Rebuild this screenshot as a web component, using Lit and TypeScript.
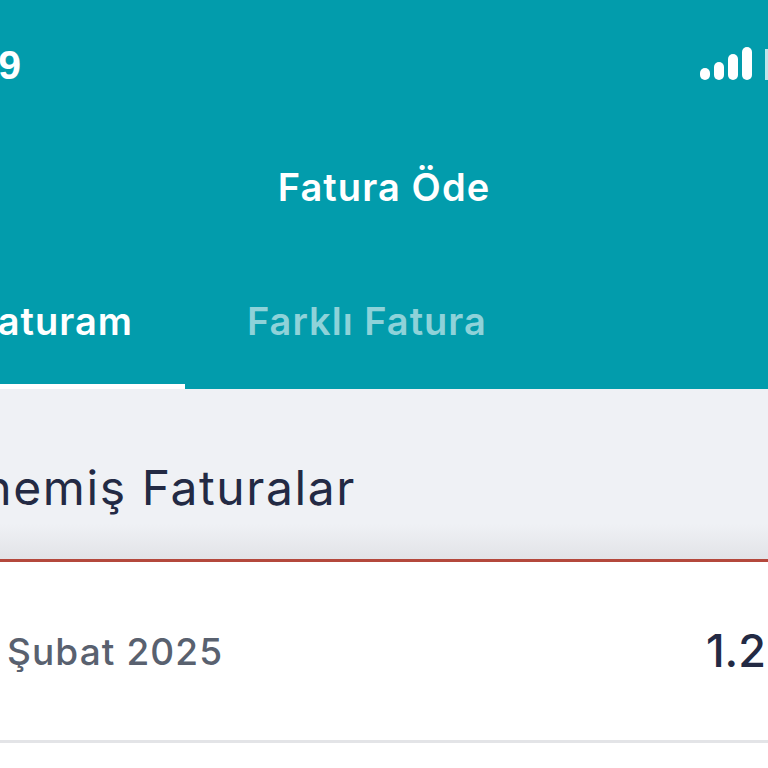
import { LitElement, html, css } from "lit";
import { customElement } from "lit/decorators.js";

@customElement("app-root")
export class AppRoot extends LitElement {
  static styles = css`
    :host { display: block; width: 768px; height: 768px; overflow: hidden; background: #fff;
      font-family: "Inter", "Noto Sans", sans-serif; }
    .header { height: 389px; background: #029cac; display: flex; flex-direction: column; color: #fff; }
    .status { height: 130px; flex: none; display: flex; align-items: flex-start; justify-content: space-between; }
    .time { font: 700 41px/1 "Liberation Sans", sans-serif; width: 21px; margin-top: 45px; display: flex; justify-content: flex-end; overflow: hidden; }
    .signal { display: flex; margin-top: 47px; }
    .signal svg { display: block; }
    .title { height: 116px; flex: none; display: flex; justify-content: center; align-items: center; font-size: 38px; font-weight: 600; letter-spacing: 1.1px; margin-top: -1px; }
    .tabs { flex: 1; display: flex; }
    .tab { font-size: 38px; font-weight: 600; letter-spacing: 1px; height: 100%; box-sizing: border-box; display: flex; align-items: center; padding-top: 8px; }
    .tab.active { width: 185px; border-bottom: 5px solid #fff; justify-content: flex-end; padding-right: 52px; padding-top: 13px; overflow: hidden; }
    .tab.other { margin-left: 62px; color: #8ed2d9; }
    .section { height: 173px; background: linear-gradient(#eff1f5 0, #eff1f5 135px, #e2e3e7 170px); display: flex; align-items: center; justify-content: flex-end; box-sizing: border-box; padding: 26px 412px 0 0; color: #232a44; font-size: 48px; letter-spacing: 1.6px; white-space: nowrap; border-bottom: 3px solid #b4483c; overflow: hidden; }
    .row { height: 181px; box-sizing: border-box; display: flex; justify-content: space-between; align-items: center; border-bottom: 3px solid #e3e4e7; padding: 0 2px 0 7px; }
    .date { color: #59616f; font-size: 37px; font-weight: 500; letter-spacing: 1.1px; }
    .amount { color: #232a44; font-size: 45px; font-weight: 500; margin-top: -2px; }
  `;

  render() {
    return html`
      <div class="header">
        <div class="status">
          <div class="time">9</div>
          <div class="signal">
            <svg width="68" height="33" viewBox="0 0 68 33" fill="#fff">
              <rect x="0" y="21" width="10" height="12" rx="5"/>
              <rect x="14" y="15" width="10" height="18" rx="5"/>
              <rect x="28" y="7" width="10" height="26" rx="5"/>
              <rect x="42" y="0" width="10" height="33" rx="5"/>
              <rect x="65" y="2" width="3" height="31" fill="#bfe6ea"/>
            </svg>
          </div>
        </div>
        <div class="title">Fatura Öde</div>
        <div class="tabs">
          <div class="tab active">aturam</div>
          <div class="tab other">Farklı Fatura</div>
        </div>
      </div>
      <div class="section">nemiş Faturalar</div>
      <div class="row">
        <span class="date">Şubat 2025</span>
        <span class="amount">1.2</span>
      </div>
    `;
  }
}
